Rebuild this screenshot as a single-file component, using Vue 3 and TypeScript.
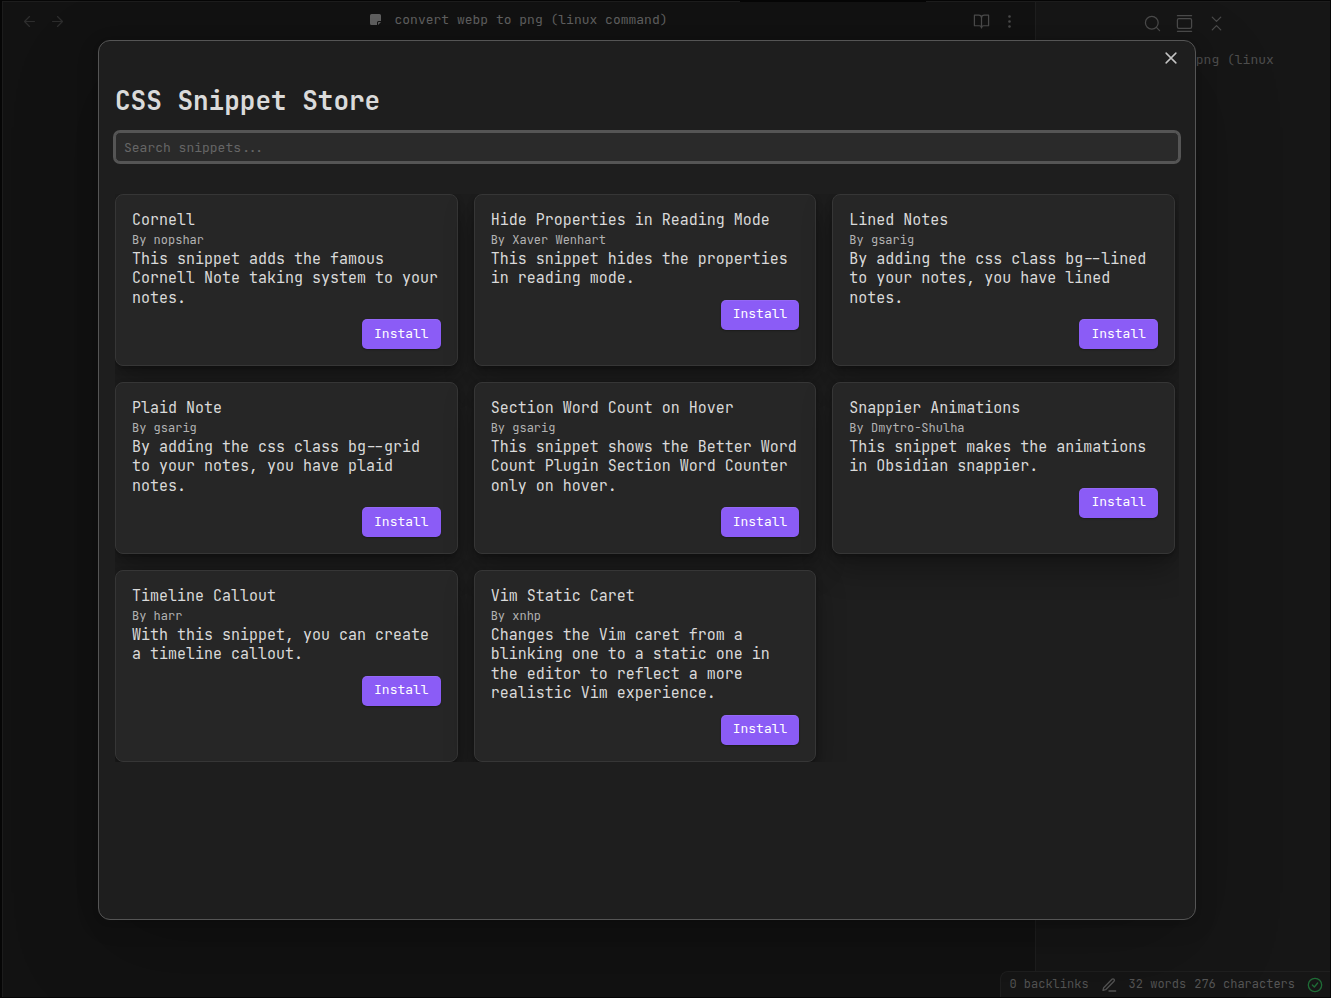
<script setup lang="ts">
import { computed, ref } from 'vue'

interface Snippet {
  name: string
  author: string
  description: string
}

const noteTitle = 'convert webp to png (linux command)'
const query = ref('')

const snippets: Snippet[] = [
  { name: 'Cornell', author: 'nopshar', description: 'This snippet adds the famous Cornell Note taking system to your notes.' },
  { name: 'Hide Properties in Reading Mode', author: 'Xaver Wenhart', description: 'This snippet hides the properties in reading mode.' },
  { name: 'Lined Notes', author: 'gsarig', description: 'By adding the css class bg--lined to your notes, you have lined notes.' },
  { name: 'Plaid Note', author: 'gsarig', description: 'By adding the css class bg--grid to your notes, you have plaid notes.' },
  { name: 'Section Word Count on Hover', author: 'gsarig', description: 'This snippet shows the Better Word Count Plugin Section Word Counter only on hover.' },
  { name: 'Snappier Animations', author: 'Dmytro-Shulha', description: 'This snippet makes the animations in Obsidian snappier.' },
  { name: 'Timeline Callout', author: 'harr', description: 'With this snippet, you can create a timeline callout.' },
  { name: 'Vim Static Caret', author: 'xnhp', description: 'Changes the Vim caret from a blinking one to a static one in the editor to reflect a more realistic Vim experience.' },
]

const visible = computed(() => {
  const q = query.value.trim().toLowerCase()
  return snippets.filter((s) => `${s.name} ${s.author} ${s.description}`.toLowerCase().includes(q))
})
</script>

<template>
  <div class="app">
    <div class="tab-edge"><span class="edge-left"></span><span class="edge-gap"></span><span class="edge-right"></span></div>
    <div class="workspace">
      <main class="editor">
        <header class="view-header">
          <nav class="history" aria-label="History">
            <button type="button" class="icon-btn faint" aria-label="Back">
              <svg viewBox="0 0 24 24"><path d="m12 19-7-7 7-7M19 12H5" /></svg>
            </button>
            <button type="button" class="icon-btn faint" aria-label="Forward">
              <svg viewBox="0 0 24 24"><path d="M5 12h14M12 5l7 7-7 7" /></svg>
            </button>
          </nav>
          <div class="view-title">
            <svg class="note-icon" viewBox="0 0 12 12" aria-hidden="true">
              <path d="M1.500 0h8A1.500 1.500 0 0 1 11 1.500V7H8.500A1.500 1.500 0 0 0 7 8.500V11H1.500A1.500 1.500 0 0 1 0 9.500v-8A1.500 1.500 0 0 1 1.500 0Z" />
              <path d="M11 8 8 11V8.700A.7.7 0 0 1 8.700 8Z" />
            </svg>
            <span>{{ noteTitle }}</span>
          </div>
          <div class="view-actions">
            <button type="button" class="icon-btn" aria-label="Reading view">
              <svg viewBox="0 0 24 24"><path d="M2 3h6a4 4 0 0 1 4 4v14a3 3 0 0 0-3-3H2zM22 3h-6a4 4 0 0 0-4 4v14a3 3 0 0 1 3-3h7z" /></svg>
            </button>
            <button type="button" class="icon-btn" aria-label="More options">
              <svg class="dots" viewBox="0 0 24 24"><circle cx="12" cy="5" r="1" /><circle cx="12" cy="12" r="1" /><circle cx="12" cy="19" r="1" /></svg>
            </button>
          </div>
        </header>
      </main>
      <aside class="sidebar">
        <div class="side-tools">
          <button type="button" class="icon-btn" aria-label="Search">
            <svg viewBox="0 0 24 24"><circle cx="11" cy="11" r="9" /><path d="m22 22-4.500-4.500" /></svg>
          </button>
          <button type="button" class="icon-btn" aria-label="Show more context">
            <svg viewBox="0 0 24 24"><path d="M2 1h20M2 23h20" /><rect x="2" y="5" width="20" height="14" rx="2" /></svg>
          </button>
          <button type="button" class="icon-btn" aria-label="Collapse results">
            <svg viewBox="0 0 24 24"><path d="m6 21 6-6 6 6M6 3l6 6 6-6" /></svg>
          </button>
        </div>
        <p class="side-note">{{ noteTitle }}</p>
      </aside>
    </div>

    <footer class="status-bar">
      <span>0 backlinks</span>
      <svg viewBox="0 0 24 24" aria-hidden="true"><path d="M12 21h10M16.500 3.500a2.100 2.100 0 0 1 3 3L7 19l-4 1 1-4Z" /></svg>
      <span class="counts"><span>32 words</span><span>276 characters</span></span>
      <svg class="synced" viewBox="0 0 24 24" aria-hidden="true"><circle cx="12" cy="12" r="10" /><path d="m8 12 3 3 5-6" /></svg>
    </footer>

    <div class="overlay">
      <section class="modal" role="dialog" aria-modal="true" aria-labelledby="store-title">
        <button type="button" class="close" aria-label="Close">
          <svg viewBox="0 0 24 24"><path d="M18.500 5.500l-13 13M5.500 5.500l13 13" /></svg>
        </button>
        <h1 id="store-title">CSS Snippet Store</h1>
        <input v-model="query" class="search" type="text" placeholder="Search snippets..." aria-label="Search snippets" />
        <div class="grid">
          <article v-for="s in visible" :key="s.name" class="card">
            <h2>{{ s.name }}</h2>
            <p class="author">By {{ s.author }}</p>
            <p class="description">{{ s.description }}</p>
            <button type="button" class="install">Install</button>
          </article>
        </div>
      </section>
    </div>
  </div>
</template>

<style>
body {
  background: #060606;
}
</style>

<style scoped>
.app,
.app * {
  box-sizing: border-box;
}

.app {
  position: relative;
  display: flex;
  flex-direction: column;
  min-height: 100vh;
  padding: 1px 1px 1px 2px;
  overflow: hidden;
  background: #060606;
  color: #555;
  font-family: "JetBrains Mono", "DejaVu Sans Mono", "Liberation Mono", monospace;
  font-size: 13px;
  line-height: 1.3;
}

h1,
h2,
p {
  margin: 0;
}

button {
  font: inherit;
  border: 0;
  cursor: pointer;
}

svg {
  display: block;
  width: 17px;
  height: 17px;
  fill: none;
  stroke: currentColor;
  stroke-width: 1.75;
  stroke-linecap: round;
  stroke-linejoin: round;
}

.tab-edge {
  display: flex;
  height: 1px;
}

.edge-left {
  flex: 738;
  background: #1d1d1d;
}

.edge-gap {
  flex: 186;
}

.edge-right {
  flex: 404;
  background: #1d1d1d;
}

.workspace {
  flex: 1;
  display: flex;
  border-left: 1px solid #1c1c1c;
}

.editor {
  flex: 1;
  background: #121212;
}

.view-header {
  display: grid;
  grid-template-columns: 96px 1fr 96px;
  align-items: center;
  height: 38px;
}

.history,
.view-actions {
  display: flex;
  align-items: center;
}

.history {
  padding-left: 12px;
}

.view-actions {
  justify-content: flex-end;
  padding-right: 12px;
}

.icon-btn {
  display: grid;
  place-items: center;
  width: 28px;
  height: 28px;
  padding: 0;
  background: none;
  color: #4b4b4b;
}

.faint {
  color: #2d2d2d;
}

.dots {
  fill: currentColor;
}

.view-title {
  display: flex;
  justify-content: center;
  align-items: center;
  gap: 12px;
  padding-bottom: 2px;
  color: #606060;
}

.note-icon {
  width: 12px;
  height: 12px;
  fill: currentColor;
  stroke: none;
}

.sidebar {
  width: 295px;
  border-left: 1px solid #1f1f1f;
  background: #161616;
}

.side-tools {
  display: flex;
  justify-content: center;
  gap: 4px;
  padding: 7px 0 0 3px;
}

.side-note {
  padding: 15px 50px 0 35px;
  color: #4e4e4e;
}

.status-bar {
  position: absolute;
  right: 1px;
  bottom: 1px;
  display: flex;
  align-items: center;
  gap: 12px;
  height: 26px;
  padding: 1px 7px 0 8px;
  border: 1px solid #1f1f1f;
  border-width: 1px 0 0 1px;
  border-radius: 8px 0 0 0;
  background: #161616;
  color: #555;
  font-size: 12px;
}

.status-bar svg {
  width: 16px;
  height: 16px;
  stroke-width: 2;
}

.counts {
  display: flex;
  gap: 8px;
}

.status-bar .synced {
  color: #1f6b36;
}

.overlay {
  position: absolute;
  inset: 0;
  display: flex;
  padding: 40px 135px 78px 98px;
}

.modal {
  position: relative;
  flex: 1;
  padding: 44px 16px 16px;
  border: 1px solid #555;
  border-radius: 12px;
  background: #1e1e1e;
  color: #dadada;
  box-shadow: 0 2px 7px rgba(0, 0, 0, 0.07), 0 6px 25px rgba(0, 0, 0, 0.11), 0 30px 90px rgba(0, 0, 0, 0.2);
}

.close {
  position: absolute;
  top: 5px;
  right: 12px;
  display: grid;
  place-items: center;
  width: 24px;
  height: 24px;
  padding: 0;
  background: none;
  color: #c4c4c4;
}

.close svg {
  width: 18px;
  height: 18px;
  stroke-width: 2;
}

h1 {
  font-size: 26px;
  font-weight: 700;
  line-height: 32px;
}

.search {
  display: block;
  width: 100%;
  height: 30px;
  margin-top: 15px;
  padding: 0 8px;
  border: 1px solid #555;
  border-radius: 5px;
  outline: none;
  background: #2a2a2a;
  box-shadow: 0 0 0 2px #555;
  color: #dadada;
  font: inherit;
}

.search::placeholder {
  color: #666;
  opacity: 1;
}

.grid {
  display: grid;
  grid-template-columns: repeat(3, minmax(0, 1fr));
  gap: 16px;
  margin-top: 32px;
  padding-right: 4px;
  overflow: hidden;
}

.card {
  display: flex;
  flex-direction: column;
  padding: 16px;
  border: 1px solid #363636;
  border-radius: 8px;
  background: #262626;
  font-size: 15px;
  box-shadow: 0 1px 2px rgba(0, 0, 0, 0.12), 0 3px 7px rgba(0, 0, 0, 0.18), 0 15px 30px rgba(0, 0, 0, 0.3);
}

h2 {
  font-size: 15px;
  font-weight: 400;
}

.author {
  color: #b3b3b3;
  font-size: 12px;
  line-height: 19px;
}

.install {
  align-self: flex-end;
  height: 30px;
  margin-top: 11px;
  padding: 0 12px;
  border-radius: 5px;
  background: #8b5cf6;
  color: #fff;
  font-size: 13px;
  box-shadow: 0 1px 2px rgba(0, 0, 0, 0.3), inset 0 1px 0 rgba(255, 255, 255, 0.08);
}
</style>
